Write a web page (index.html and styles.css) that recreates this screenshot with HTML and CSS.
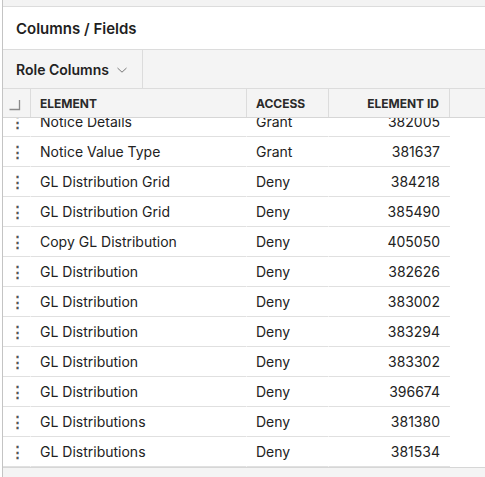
FILE: index.html
```html
<!DOCTYPE html>
<html>
<head>
<meta charset="utf-8">
<link rel="stylesheet" href="styles.css">
</head>
<body>
<div class="frame">
  <div class="topbar"></div>
  <div class="title">Columns / Fields</div>
  <div class="toolbar">
    <div class="menu-btn">Role Columns
      <svg class="chev" width="12" height="8" viewBox="0 0 12 8"><path d="M1.5 2 L6 6.2 L10.5 2" fill="none" stroke="#777" stroke-width="1"/></svg>
    </div>
  </div>
  <div class="grid">
    <div class="head">
      <div class="hc sel"><svg width="27" height="28" viewBox="0 0 27 28"><path d="M6.5 20.5 H16.5 V11" fill="none" stroke="#8a8a8a" stroke-width="1.3"/></svg></div>
      <div class="hc el">ELEMENT</div>
      <div class="hc ac">ACCESS</div>
      <div class="hc id">ELEMENT ID</div>
    </div>
    <div class="body">
      <div class="rows">
        <div class="row"><div class="c h">⋮</div><div class="c el">Notice Details</div><div class="c ac">Grant</div><div class="c id">382005</div></div>
        <div class="row"><div class="c h">⋮</div><div class="c el">Notice Value Type</div><div class="c ac">Grant</div><div class="c id">381637</div></div>
        <div class="row"><div class="c h">⋮</div><div class="c el">GL Distribution Grid</div><div class="c ac">Deny</div><div class="c id">384218</div></div>
        <div class="row"><div class="c h">⋮</div><div class="c el">GL Distribution Grid</div><div class="c ac">Deny</div><div class="c id">385490</div></div>
        <div class="row"><div class="c h">⋮</div><div class="c el">Copy GL Distribution</div><div class="c ac">Deny</div><div class="c id">405050</div></div>
        <div class="row"><div class="c h">⋮</div><div class="c el">GL Distribution</div><div class="c ac">Deny</div><div class="c id">382626</div></div>
        <div class="row"><div class="c h">⋮</div><div class="c el">GL Distribution</div><div class="c ac">Deny</div><div class="c id">383002</div></div>
        <div class="row"><div class="c h">⋮</div><div class="c el">GL Distribution</div><div class="c ac">Deny</div><div class="c id">383294</div></div>
        <div class="row"><div class="c h">⋮</div><div class="c el">GL Distribution</div><div class="c ac">Deny</div><div class="c id">383302</div></div>
        <div class="row"><div class="c h">⋮</div><div class="c el">GL Distribution</div><div class="c ac">Deny</div><div class="c id">396674</div></div>
        <div class="row"><div class="c h">⋮</div><div class="c el">GL Distributions</div><div class="c ac">Deny</div><div class="c id">381380</div></div>
        <div class="row"><div class="c h">⋮</div><div class="c el">GL Distributions</div><div class="c ac">Deny</div><div class="c id">381534</div></div>
      </div>
    </div>
    <div class="foot"></div>
  </div>
</div>
</body>
</html>
```
FILE: styles.css
```css
* { box-sizing: border-box; }
html, body { margin: 0; padding: 0; background: #fff; }
body {
  font-family: Inter, "Noto Sans", sans-serif;
  color: #1e1e1e;
  width: 485px;
  height: 477px;
  overflow: hidden;
}
.frame {
  margin-left: 2px;
  border-left: 1px solid #c4c4c4;
  height: 477px;
  display: flex;
  flex-direction: column;
}
.topbar {
  height: 7px;
  background: #f3f3f3;
  border-bottom: 1px solid #dcdcdc;
}
.title {
  height: 43px;
  border-bottom: 1px solid #dcdcdc;
  display: flex;
  align-items: center;
  padding-left: 13px;
  padding-top: 1px;
  font-size: 15px;
  font-weight: 600;
  color: #1f1f1f;
}
.toolbar {
  height: 39px;
  background: #f4f4f4;
  border-bottom: 1px solid #dcdcdc;
  display: flex;
}
.menu-btn {
  width: 140px;
  border-right: 1px solid #dcdcdc;
  display: flex;
  align-items: center;
  padding-left: 13px;
  font-size: 14px;
  font-weight: 600;
  color: #222;
  gap: 7px;
}
.chev { margin-top: 1px; }
.grid {
  flex: 1;
  display: flex;
  flex-direction: column;
  min-height: 0;
}
.head {
  height: 29px;
  background: #f4f4f4;
  border-bottom: 1px solid #d6d6d6;
  display: flex;
}
.hc {
  border-right: 1px solid #dcdcdc;
  display: flex;
  align-items: center;
  font-size: 12px;
  font-weight: 700;
  color: #2a2a2a;
  padding-top: 1px;
}
.sel { width: 28px; padding: 0; }
.head .el, .row .el { width: 216px; padding-left: 9px; }
.head .ac, .row .ac { width: 82px; padding-left: 9px; }
.head .id, .row .id { width: 121px; justify-content: flex-end; padding-right: 10px; }
.body {
  height: 349px;
  overflow: hidden;
}
.rows { margin-top: -11px; }
.row {
  height: 30px;
  display: flex;
  width: 447px;
}
.c {
  display: flex;
  align-items: center;
  font-size: 14px;
  color: #222;
  border-bottom: 1px solid #e0e0e0;
  border-right: 1px solid #fff;
}
.c.h {
  width: 28px;
  justify-content: center;
  font-size: 15px;
  font-weight: 700;
  color: #555;
  padding-left: 1px;
}
.row .id { border-right: none; }
.foot {
  flex: 1;
  background: #f4f4f4;
  border-top: 1px solid #d6d6d6;
}
```
